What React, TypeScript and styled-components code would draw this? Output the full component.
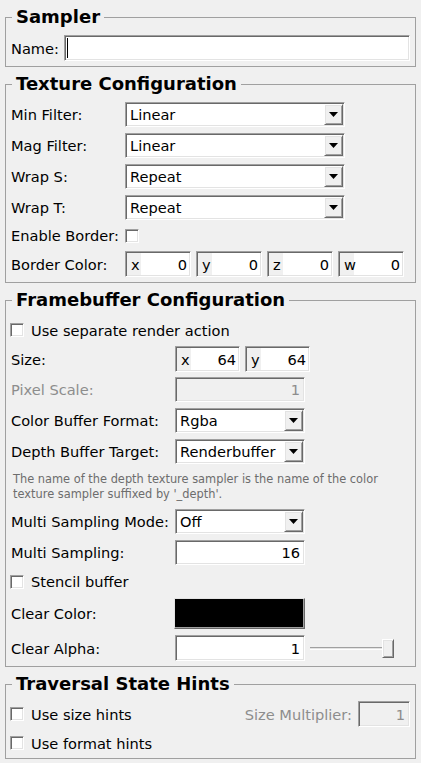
import React from "react";
import styled, { createGlobalStyle, css } from "styled-components";

const GlobalStyle = createGlobalStyle`
  *, *::before, *::after { box-sizing: border-box; }
  html, body { margin: 0; padding: 0; background: #f0f0f0; }
  body {
    font-family: "DejaVu Sans", Verdana, sans-serif;
    font-size: 14.6px;
    color: #000;
  }
`;

/* ── classic 3d edges ── */

const sunken = css`
  border: 1px solid;
  border-color: #a0a0a0 #ffffff #ffffff #a0a0a0;
  box-shadow: inset 1px 1px 0 #696969, inset -1px -1px 0 #e3e3e3;
  padding: 1px;
`;

const raised = css`
  border: 1px solid;
  border-color: #ffffff #696969 #696969 #ffffff;
  box-shadow: inset 1px 1px 0 #e3e3e3, inset -1px -1px 0 #a0a0a0;
`;

/* ── page & groups ── */

const Panel = styled.div`
  display: flex;
  flex-direction: column;
  gap: 7px;
  padding: 7px 5px 5px;
`;

const Group = styled.fieldset<{ $top: number }>`
  margin: 0;
  min-width: 0;
  border: 1px solid #a0a0a0;
  padding: ${(p) => p.$top}px 5px 5px;
  display: flex;
  flex-direction: column;
  gap: 6px;
`;

const Legend = styled.legend`
  font-weight: bold;
  font-size: 18px;
  line-height: 20px;
  padding: 0 4px;
  margin-left: 1px;
`;

const Row = styled.div<{ $cols?: string; $h?: number }>`
  display: grid;
  grid-template-columns: ${(p) => p.$cols ?? "auto"};
  align-items: center;
  height: ${(p) => p.$h ?? 25}px;
`;

const Label = styled.span<{ $disabled?: boolean }>`
  white-space: nowrap;
  color: ${(p) => (p.$disabled ? "#8d8d8d" : "#000")};
`;

const Note = styled.div`
  font-size: 11.4px;
  line-height: 15px;
  color: #6d6d6d;
  padding: 2px 0 0 2px;
  height: 33px;
`;

/* ── inputs ── */

const TextBox = styled.div<{ $w?: number; $h?: number; $disabled?: boolean }>`
  ${sunken};
  width: ${(p) => (p.$w ? `${p.$w}px` : "100%")};
  height: ${(p) => p.$h ?? 25}px;
  background: ${(p) => (p.$disabled ? "#f0f0f0" : "#fff")};
  color: ${(p) => (p.$disabled ? "#8d8d8d" : "#000")};
  display: flex;
  align-items: center;
  justify-content: flex-end;
  padding-right: 4px;
`;

const NameBox = styled(TextBox)`
  justify-content: flex-start;
  padding-left: 2px;
`;

const Caret = styled.span`
  width: 1px;
  height: 20px;
  background: #000;
`;

const ComboBox = styled.div<{ $w: number }>`
  ${sunken};
  width: ${(p) => p.$w}px;
  height: 25px;
  background: #fff;
  display: flex;
  align-items: center;
`;

const ComboText = styled.span`
  flex: 1;
  padding-left: 3px;
  white-space: nowrap;
  overflow: hidden;
`;

const ComboButton = styled.div`
  ${raised};
  width: 19px;
  height: 21px;
  background: #f0f0f0;
  display: flex;
  align-items: center;
  justify-content: center;
`;

const VecRow = styled.div`
  display: flex;
  gap: 5px;
`;

const VecField = styled.div<{ $w: number }>`
  ${sunken};
  width: ${(p) => p.$w}px;
  height: 26px;
  background: #fff;
  display: flex;
`;

const Axis = styled.span`
  width: 14px;
  background: #f0f0f0;
  padding-left: 4px;
  display: flex;
  align-items: center;
`;

const VecValue = styled.span`
  flex: 1;
  display: flex;
  align-items: center;
  justify-content: flex-end;
  padding-right: 2px;
`;

const Check = styled.span`
  ${sunken};
  display: inline-block;
  width: 14px;
  height: 14px;
  background: #fff;
  flex: none;
`;

const CheckRow = styled.div<{ $h?: number }>`
  display: flex;
  align-items: center;
  gap: 7px;
  height: ${(p) => p.$h ?? 20}px;
  padding-left: -1px;
  margin-left: -1px;
`;

const Swatch = styled.div`
  ${raised};
  border-color: #e3e3e3 #696969 #696969 #e3e3e3;
  box-shadow: inset -1px -1px 0 #a0a0a0;
  width: 131px;
  height: 31px;
  background: #000;
  margin-left: -1px;
`;

const AlphaRow = styled.div`
  display: flex;
  align-items: center;
  gap: 5px;
`;

const Slider = styled.div`
  width: 84px;
  height: 19px;
  display: flex;
  align-items: center;
`;

const Track = styled.div`
  flex: 1;
  height: 3px;
  border-top: 1px solid #a0a0a0;
  border-bottom: 1px solid #fff;
  background: #e3e3e3;
`;

const Thumb = styled.div`
  ${raised};
  width: 12px;
  height: 19px;
  background: #f0f0f0;
`;

const HintsRow = styled.div`
  display: flex;
  align-items: center;
  height: 26px;
`;

const Spacer = styled.div`
  flex: 1;
`;

const MultLabel = styled(Label)`
  margin-right: 6px;
`;

/* ── small composed widgets ── */

const Combo: React.FC<{ value: string; width: number }> = ({ value, width }) => (
  <ComboBox $w={width}>
    <ComboText>{value}</ComboText>
    <ComboButton>
      <svg width="9" height="5" viewBox="0 0 9 5">
        <polygon points="0,0 9,0 4.5,5" fill="#000" />
      </svg>
    </ComboButton>
  </ComboBox>
);

const Vec: React.FC<{ axis: string; value: number; width: number }> = ({
  axis,
  value,
  width,
}) => (
  <VecField $w={width}>
    <Axis>{axis}</Axis>
    <VecValue>{value}</VecValue>
  </VecField>
);

const CheckItem: React.FC<{ label: string; h?: number }> = ({ label, h }) => (
  <CheckRow $h={h}>
    <Check />
    <Label>{label}</Label>
  </CheckRow>
);

const TEX = "114px 220px";
const FB = "164px 130px";

export default function App() {
  return (
    <>
      <GlobalStyle />
      <Panel>
        <Group $top={8}>
          <Legend>Sampler</Legend>
          <Row $cols="53px 1fr" $h={26}>
            <Label>Name:</Label>
            <NameBox $h={26}>
              <Caret />
            </NameBox>
          </Row>
        </Group>

        <Group $top={8}>
          <Legend>Texture Configuration</Legend>
          <Row $cols={TEX}>
            <Label>Min Filter:</Label>
            <Combo value="Linear" width={220} />
          </Row>
          <Row $cols={TEX}>
            <Label>Mag Filter:</Label>
            <Combo value="Linear" width={220} />
          </Row>
          <Row $cols={TEX}>
            <Label>Wrap S:</Label>
            <Combo value="Repeat" width={220} />
          </Row>
          <Row $cols={TEX}>
            <Label>Wrap T:</Label>
            <Combo value="Repeat" width={220} />
          </Row>
          <Row $cols={TEX} $h={19}>
            <Label>Enable Border:</Label>
            <Check />
          </Row>
          <Row $cols="114px auto" $h={26}>
            <Label>Border Color:</Label>
            <VecRow>
              <Vec axis="x" value={0} width={66} />
              <Vec axis="y" value={0} width={66} />
              <Vec axis="z" value={0} width={66} />
              <Vec axis="w" value={0} width={66} />
            </VecRow>
          </Row>
        </Group>

        <Group $top={10}>
          <Legend>Framebuffer Configuration</Legend>
          <CheckItem label="Use separate render action" />
          <Row $cols="164px auto">
            <Label>Size:</Label>
            <VecRow>
              <Vec axis="x" value={64} width={65} />
              <Vec axis="y" value={64} width={65} />
            </VecRow>
          </Row>
          <Row $cols={FB}>
            <Label $disabled>Pixel Scale:</Label>
            <TextBox $disabled>1</TextBox>
          </Row>
          <Row $cols={FB}>
            <Label>Color Buffer Format:</Label>
            <Combo value="Rgba" width={130} />
          </Row>
          <Row $cols={FB}>
            <Label>Depth Buffer Target:</Label>
            <Combo value="Renderbuffer" width={130} />
          </Row>
          <Note>
            The name of the depth texture sampler is the name of the color
            <br />
            texture sampler suffixed by '_depth'.
          </Note>
          <Row $cols={FB}>
            <Label>Multi Sampling Mode:</Label>
            <Combo value="Off" width={130} />
          </Row>
          <Row $cols={FB}>
            <Label>Multi Sampling:</Label>
            <TextBox>16</TextBox>
          </Row>
          <CheckItem label="Stencil buffer" h={21} />
          <Row $cols="164px auto" $h={31}>
            <Label>Clear Color:</Label>
            <Swatch />
          </Row>
          <Row $cols="164px auto" $h={26}>
            <Label>Clear Alpha:</Label>
            <AlphaRow>
              <TextBox $w={130} $h={26}>1</TextBox>
              <Slider>
                <Track />
                <Thumb />
              </Slider>
            </AlphaRow>
          </Row>
        </Group>

        <Group $top={7}>
          <Legend>Traversal State Hints</Legend>
          <HintsRow>
            <CheckItem label="Use size hints" />
            <Spacer />
            <MultLabel $disabled>Size Multiplier:</MultLabel>
            <TextBox $w={52} $h={26} $disabled>
              1
            </TextBox>
          </HintsRow>
          <CheckItem label="Use format hints" />
        </Group>
      </Panel>
    </>
  );
}
